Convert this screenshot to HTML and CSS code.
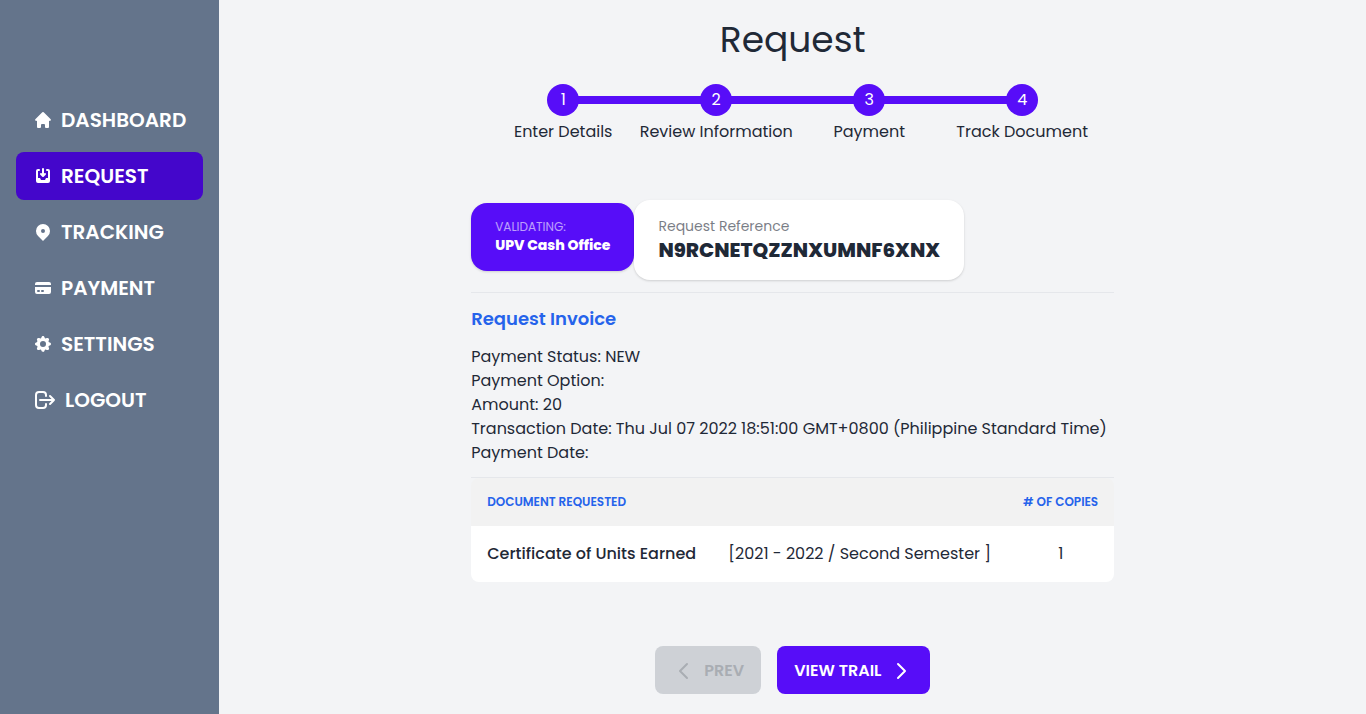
FILE: index.html
```html
<!DOCTYPE html>
<html lang="en">
<head>
<meta charset="utf-8">
<title>Request</title>
<link rel="stylesheet" href="styles.css">
</head>
<body>
<div class="app">
  <aside class="sidebar">
    <nav class="menu">
      <a class="item"><svg class="icon" viewBox="0 0 20 20"><path d="M10.7 2.3a1 1 0 0 0-1.4 0l-7 7a1 1 0 0 0 1.4 1.4L4 10.4V17a1 1 0 0 0 1 1h2a1 1 0 0 0 1-1v-2a1 1 0 0 1 1-1h2a1 1 0 0 1 1 1v2a1 1 0 0 0 1 1h2a1 1 0 0 0 1-1v-6.6l.3.3a1 1 0 0 0 1.4-1.4z"/></svg><span>DASHBOARD</span></a>
      <a class="item active"><svg class="icon" viewBox="0 0 20 20"><path d="M8.707 7.293a1 1 0 0 0-1.414 1.414l2 2a1 1 0 0 0 1.414 0l2-2a1 1 0 0 0-1.414-1.414L11 7.586V3a1 1 0 1 0-2 0v4.586l-.293-.293z"/><path d="M3 5a2 2 0 0 1 2-2h1a1 1 0 0 1 0 2H5v7h2l1 2h4l1-2h2V5h-1a1 1 0 1 1 0-2h1a2 2 0 0 1 2 2v10a2 2 0 0 1-2 2H5a2 2 0 0 1-2-2V5z"/></svg><span>REQUEST</span></a>
      <a class="item"><svg class="icon" viewBox="0 0 20 20"><path fill-rule="evenodd" d="M5.050 4.050a7 7 0 1 1 9.900 9.900L10 18.900l-4.950-4.950a7 7 0 0 1 0-9.900zM10 11a2 2 0 1 0 0-4 2 2 0 0 0 0 4z"/></svg><span>TRACKING</span></a>
      <a class="item"><svg class="icon" viewBox="0 0 20 20"><path d="M4 4a2 2 0 0 0-2 2v1h16V6a2 2 0 0 0-2-2z"/><path fill-rule="evenodd" d="M18 9H2v5a2 2 0 0 0 2 2h12a2 2 0 0 0 2-2zM4 13a1 1 0 0 1 1-1h1a1 1 0 1 1 0 2H5a1 1 0 0 1-1-1zm5-1a1 1 0 1 0 0 2h1a1 1 0 1 0 0-2z"/></svg><span>PAYMENT</span></a>
      <a class="item"><svg class="icon" viewBox="0 0 20 20"><path fill-rule="evenodd" d="M11.490 3.170c-.38-1.560-2.600-1.560-2.980 0a1.532 1.532 0 0 1-2.286.948c-1.372-.836-2.942.734-2.106 2.106.54.886.061 2.042-.947 2.287-1.561.379-1.561 2.600 0 2.978a1.532 1.532 0 0 1 .947 2.287c-.836 1.372.734 2.942 2.106 2.106a1.532 1.532 0 0 1 2.287.947c.379 1.561 2.600 1.561 2.978 0a1.533 1.533 0 0 1 2.287-.947c1.372.836 2.942-.734 2.106-2.106a1.533 1.533 0 0 1 .947-2.287c1.561-.379 1.561-2.600 0-2.978a1.532 1.532 0 0 1-.947-2.287c.836-1.372-.734-2.942-2.106-2.106a1.532 1.532 0 0 1-2.287-.947zM10 13a3 3 0 1 0 0-6 3 3 0 0 0 0 6z"/></svg><span>SETTINGS</span></a>
      <a class="item"><svg class="icon out" viewBox="0 0 24 24"><path d="M17 16l4-4m0 0l-4-4m4 4H7m6 4v1a3 3 0 0 1-3 3H6a3 3 0 0 1-3-3V7a3 3 0 0 1 3-3h4a3 3 0 0 1 3 3v1"/></svg><span>LOGOUT</span></a>
    </nav>
  </aside>
  <main class="main">
    <h1 class="title">Request</h1>
    <ol class="steps">
      <li class="step"><b class="dot">1</b><span>Enter Details</span></li>
      <li class="step"><b class="dot">2</b><span>Review Information</span></li>
      <li class="step"><b class="dot">3</b><span>Payment</span></li>
      <li class="step"><b class="dot">4</b><span>Track Document</span></li>
    </ol>
    <section class="content">
      <div class="stats">
        <div class="stat office"><div class="label">VALIDATING:</div><div class="value">UPV Cash Office</div></div>
        <div class="stat ref"><div class="label">Request Reference</div><div class="value">N9RCNETQZZNXUMNF6XNX</div></div>
      </div>
      <h2 class="heading">Request Invoice</h2>
      <div class="details">
        <div>Payment Status: NEW</div>
        <div>Payment Option:</div>
        <div>Amount: 20</div>
        <div>Transaction Date: Thu Jul 07 2022 18:51:00 GMT+0800 (Philippine Standard Time)</div>
        <div>Payment Date:</div>
      </div>
      <div class="table">
        <div class="row head"><span>DOCUMENT REQUESTED</span><span># OF COPIES</span></div>
        <div class="row body"><div class="doc">Certificate of Units Earned</div><div class="term">[2021 - 2022 / Second Semester ]</div><div class="copies">1</div></div>
      </div>
    </section>
    <div class="actions">
      <button class="btn prev" disabled><svg class="chev" viewBox="0 0 24 24"><path d="M15 19l-7-7 7-7"/></svg><span>PREV</span></button>
      <button class="btn next"><span>VIEW TRAIL</span><svg class="chev" viewBox="0 0 24 24"><path d="M9 5l7 7-7 7"/></svg></button>
    </div>
  </main>
</div>
</body>
</html>
```
FILE: styles.css
```css
* { box-sizing: border-box; }
body { margin: 0; background: #f3f4f6; color: #1f2937; font: 400 16px/24px Poppins, Inter, sans-serif; }
h1, h2, ol { margin: 0; padding: 0; font-weight: 400; }
span { white-space: nowrap; }
.app { display: flex; width: 1366px; height: 714px; overflow: hidden; }
.sidebar { width: 219.4px; background: #64748b; padding: 96px 16px 0; }
.menu { display: flex; flex-direction: column; gap: 8px; width: 187px; }
.item { display: flex; align-items: center; gap: 8px; height: 48px; padding-left: 17px; border-radius: 8px; color: #fff; font-size: 20px; font-weight: 600; line-height: 28px; }
.active { background: #4406cb; }
.icon { width: 20px; height: 20px; fill: #fff; flex: none; }
.out { width: 24px; height: 24px; fill: none; stroke: #fff; stroke-width: 2; stroke-linecap: round; stroke-linejoin: round; }
.main { flex: 1; display: flex; flex-direction: column; align-items: center; }
.title { margin-top: 20px; font-size: 36px; line-height: 40px; }
.steps { display: flex; width: 612px; margin-top: 20px; list-style: none; }
.step { position: relative; width: 153px; display: flex; flex-direction: column; align-items: center; padding-top: 4px; gap: 4px; }
.step + .step::before { content: ""; position: absolute; top: 16px; left: -76px; width: 153px; height: 8px; background: #570df8; }
.dot { position: relative; z-index: 1; width: 32px; height: 32px; border-radius: 50%; background: #570df8; color: #fff; font-weight: 400; line-height: 32px; text-align: center; }
.content { width: 643px; margin-top: 56px; }
.stats { display: flex; align-items: flex-start; height: 93px; border-bottom: 1px solid #e5e7eb; }
.stat { border-radius: 16px; padding: 16px 24px; white-space: nowrap; box-shadow: 0 1px 3px rgba(0,0,0,.1), 0 1px 2px rgba(0,0,0,.06); }
.office { height: 68px; margin-top: 3px; background: #570df8; color: #fff; font-size: 14px; }
.office .label { font-size: 12px; line-height: 16px; opacity: .6; }
.office .value { line-height: 20px; font-weight: 800; }
.ref { height: 80px; background: #fff; }
.ref .label { font-size: 14px; line-height: 20px; opacity: .6; }
.ref .value { font-size: 20px; line-height: 28px; font-weight: 800; }
.heading { margin-top: 12px; font-size: 18px; line-height: 28px; font-weight: 600; color: #2563eb; }
.details { margin-top: 12px; padding-bottom: 12px; border-bottom: 1px solid #e5e7eb; }
.table { border-radius: 8px; overflow: hidden; }
.row { display: flex; align-items: center; padding: 0 16px; }
.head { justify-content: space-between; height: 48px; background: #f2f2f2; color: #2563eb; font-size: 12px; font-weight: 600; }
.body { height: 56px; background: #fff; white-space: nowrap; }
.doc { width: 241px; font-weight: 500; }
.term { width: 295px; }
.copies { width: 75px; text-align: center; }
.actions { display: flex; gap: 16px; margin-top: 64px; }
.btn { display: flex; align-items: center; height: 48px; padding: 2px 17px 0; border: 0; border-radius: 8px; font: inherit; font-weight: 600; }
.prev { width: 106px; gap: 8px; background: #ced1d6; color: #a9adb3; }
.next { width: 153px; gap: 8px; background: #570df8; color: #fff; }
.chev { width: 24px; height: 24px; flex: none; fill: none; stroke: currentColor; stroke-width: 2; stroke-linecap: round; stroke-linejoin: round; }
```
